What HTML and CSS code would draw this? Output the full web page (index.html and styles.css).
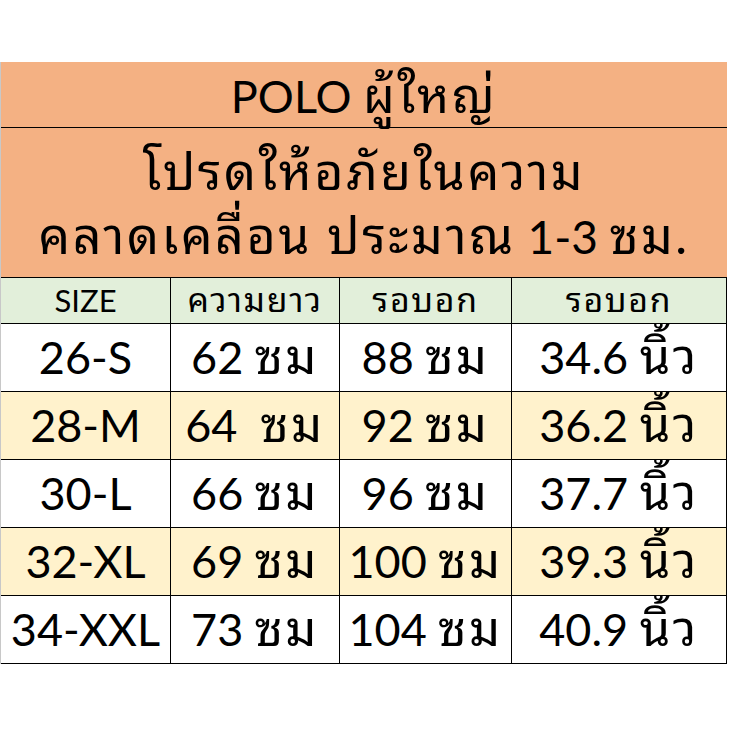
FILE: index.html
```html
<!DOCTYPE html>
<html lang="th">
<head>
<meta charset="utf-8">
<link rel="stylesheet" href="styles.css">
</head>
<body>
<div class="sheet">
  <div class="banner">
    <div class="title">POLO <span class="th">ผู้ใหญ่</span></div>
    <div class="note">
      <div class="note-line"><span class="th">โปรดให้อภัยในความ</span></div>
      <div class="note-line"><span class="th">คลาดเคลื่อน ประมาณ</span> 1-3 <span class="th">ซม.</span></div>
    </div>
  </div>
  <div class="table">
    <div class="cell head">SIZE</div>
    <div class="cell head"><span class="th">ความยาว</span></div>
    <div class="cell head"><span class="th">รอบอก</span></div>
    <div class="cell head last"><span class="th">รอบอก</span></div>

    <div class="cell">26-S</div>
    <div class="cell">62 <span class="th">ซม</span></div>
    <div class="cell">88 <span class="th">ซม</span></div>
    <div class="cell last">34.6 <span class="th">นิ้ว</span></div>

    <div class="cell alt">28-M</div>
    <div class="cell alt">64&nbsp; <span class="th">ซม</span></div>
    <div class="cell alt">92 <span class="th">ซม</span></div>
    <div class="cell alt last">36.2 <span class="th">นิ้ว</span></div>

    <div class="cell">30-L</div>
    <div class="cell">66 <span class="th">ซม</span></div>
    <div class="cell">96 <span class="th">ซม</span></div>
    <div class="cell last">37.7 <span class="th">นิ้ว</span></div>

    <div class="cell alt">32-XL</div>
    <div class="cell alt">69 <span class="th">ซม</span></div>
    <div class="cell alt">100 <span class="th">ซม</span></div>
    <div class="cell alt last">39.3 <span class="th">นิ้ว</span></div>

    <div class="cell">34-XXL</div>
    <div class="cell">73 <span class="th">ซม</span></div>
    <div class="cell">104 <span class="th">ซม</span></div>
    <div class="cell last">40.9 <span class="th">นิ้ว</span></div>
  </div>
</div>
</body>
</html>
```

FILE: styles.css
```css
html, body {
  margin: 0;
  padding: 0;
  background: #ffffff;
}

body {
  font-family: "Lato", "Noto Sans Thai Looped", "Leelawadee UI", "Tahoma", "Garuda", "Loma", "Tlwg Typo", "Noto Sans Thai", "Noto Sans", sans-serif;
  color: #000000;
}

.th {
  font-size: 1.09em;
  letter-spacing: 0.05em;
}

.sheet {
  margin-top: 62px;
  width: 727px;
  border-left: 1px solid #c8c8c8;
  box-sizing: border-box;
}

.banner {
  background: #f4b183;
}

.title {
  height: 66px;
  box-sizing: border-box;
  border-bottom: 1px solid #000;
  text-align: center;
  font-size: 45px;
  line-height: 64px;
  white-space: pre;
}

.note {
  height: 149px;
  display: flex;
  flex-direction: column;
  justify-content: center;
  align-items: center;
  font-size: 46px;
}

.note-line {
  height: 64px;
  line-height: 64px;
  white-space: pre;
}

.table {
  display: grid;
  grid-template-columns: 170px 169px 172px 215px;
  grid-template-rows: 46px repeat(5, 68px);
  border-top: 1px solid #000;
}

.cell {
  text-align: center;
  font-size: 45px;
  line-height: 66px;
  border-right: 1px solid #000;
  border-bottom: 1px solid #000;
  background: #ffffff;
  white-space: pre;
  overflow: hidden;
}

.cell .th {
  line-height: 1;
}

.cell.head {
  background: #e2efda;
  font-size: 31px;
  line-height: 44px;
}

.cell.alt {
  background: #fff2cc;
}
```
